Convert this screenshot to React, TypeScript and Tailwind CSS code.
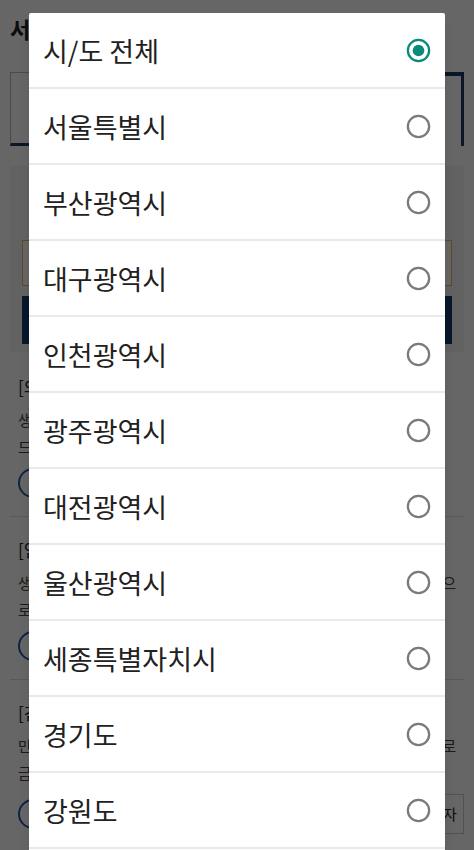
import { useState } from "react";

const REGIONS = [
  "시/도 전체",
  "서울특별시",
  "부산광역시",
  "대구광역시",
  "인천광역시",
  "광주광역시",
  "대전광역시",
  "울산광역시",
  "세종특별자치시",
  "경기도",
  "강원도",
];

const ITEMS = [
  {
    title: "[의료] 저소득층 의료비 지원 사업",
    line1: "생계·의료 급여 수급자에게 의료비를 지원해",
    line2: "드립니다.",
    full: false,
  },
  {
    title: "[임신·출산] 임산부 건강관리 지원",
    line1: "생애 초기 건강관리를 위해 임산부 가정을 방문하여 상담으",
    line2: "로 건강관리를 도와드립니다.",
    full: true,
  },
  {
    title: "[검진] 국가 암 검진 비용 지원",
    line1: "만 40세 이상 국민을 대상으로 암 검진 비용을 지원하여 조기 발견으로",
    line2: "금전적 부담을 줄여 드리고 건강한 생활을 돕습니다.",
    full: true,
  },
];

function Radio({ checked }: { checked: boolean }) {
  return (
    <svg width="25" height="25" viewBox="0 0 24 24" className="shrink-0">
      <circle
        cx="12"
        cy="12"
        r="10.2"
        fill="none"
        stroke={checked ? "#0b8a7a" : "#7a7a7a"}
        strokeWidth="2.2"
      />
      {checked && <circle cx="12" cy="12" r="5.6" fill="#0b8a7a" />}
    </svg>
  );
}

export default function App() {
  const [selected, setSelected] = useState(0);

  return (
    <div className="relative h-[850px] w-full overflow-hidden bg-white font-['Noto_Sans_CJK_KR','Noto_Sans',sans-serif] text-[#222]">
      {/* 뒤쪽 페이지 */}
      <div className="px-[10px] pt-[12px]">
        <h1 className="text-[22px] font-bold leading-[32px]">서비스 찾기</h1>

        <div className="mt-[28px] flex h-[74px]">
          <div className="flex-1 border border-[#bbb] border-b-[3px] border-b-[#1c3b66]" />
          <div className="flex-1 border-t-[4px] border-r-[3px] border-[#1c3b66]" />
        </div>

        <div className="mt-[20px] bg-[#f4f4f4] px-[12px] pt-[74px] pb-[8px]">
          <div className="h-[46px] border border-[#e8b84c] bg-white" />
          <div className="mt-[10px] h-[48px] bg-[#143a66]" />
        </div>

        <div className="mt-[2px]">
          {ITEMS.map((it, i) => (
            <div key={i} className="border-b border-[#ddd] px-[8px] py-[18px]">
              <p className="text-[17px] leading-[30px]">{it.title}</p>
              <p
                className={
                  it.full
                    ? "mt-[4px] overflow-hidden whitespace-nowrap text-[15px] leading-[27px] text-[#444] [text-align-last:justify]"
                    : "mt-[4px] overflow-hidden whitespace-nowrap text-[15px] leading-[27px] text-[#444]"
                }
              >
                {it.line1}
              </p>
              <p className="overflow-hidden whitespace-nowrap text-[15px] leading-[27px] text-[#444]">
                {it.line2}
              </p>
              <div className="mt-[8px] flex items-center justify-between">
                <span className="h-[30px] w-[30px] rounded-full border-2 border-[#2a5ca8]" />
                {i === 2 && (
                  <span className="mr-[-8px] flex h-[40px] w-[28px] items-center justify-center border border-[#ccc] text-[15px]">
                    자
                  </span>
                )}
              </div>
            </div>
          ))}
        </div>
      </div>

      {/* 오버레이 + 시/도 선택 다이얼로그 */}
      <div className="absolute inset-0 bg-black/60">
        <div className="mx-[29px] mt-[13px] rounded-[2px] bg-white pb-[40px] shadow-lg">
          {REGIONS.map((r, i) => (
            <button
              key={r}
              type="button"
              onClick={() => setSelected(i)}
              className="flex h-[76px] w-full items-center justify-between border-b-2 border-[#e9e9e9] pl-[14px] pr-[14px] text-left"
            >
              <span className="text-[27px] leading-none text-[#212121]">{r}</span>
              <Radio checked={selected === i} />
            </button>
          ))}
        </div>
      </div>
    </div>
  );
}
